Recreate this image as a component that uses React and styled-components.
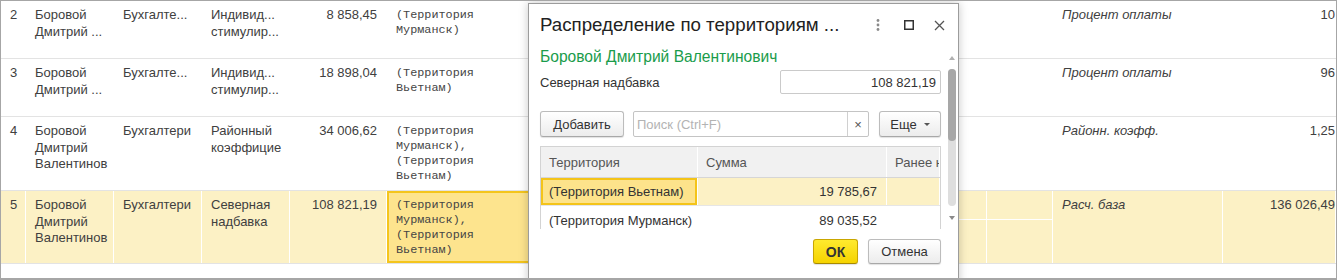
import styled, { createGlobalStyle } from 'styled-components'

const GlobalStyle = createGlobalStyle`
  html, body {
    margin: 0;
    padding: 0;
    overflow: hidden;
    background: #ffffff;
  }
  body {
    font-family: 'Liberation Sans', Arial, sans-serif;
    color: #404040;
  }
`

const COLUMNS = '25px 88px 88px 88px 97px 150px 250px 200px 66px 170px 1fr'

const rows = [
  {
    n: '2',
    name: ['Боровой', 'Дмитрий ...'],
    dept: ['Бухгалте...'],
    kind: ['Индивид...', 'стимулир...'],
    sum: '8 858,45',
    terr: ['(Территория', 'Мурманск)'],
    base: 'Процент оплаты',
    value: '10',
    height: 58,
  },
  {
    n: '3',
    name: ['Боровой', 'Дмитрий ...'],
    dept: ['Бухгалте...'],
    kind: ['Индивид...', 'стимулир...'],
    sum: '18 898,04',
    terr: ['(Территория', 'Вьетнам)'],
    base: 'Процент оплаты',
    value: '96',
    height: 58,
  },
  {
    n: '4',
    name: ['Боровой', 'Дмитрий', 'Валентинов'],
    dept: ['Бухгалтери'],
    kind: ['Районный', 'коэффицие'],
    sum: '34 006,62',
    terr: ['(Территория', 'Мурманск),', '(Территория', 'Вьетнам)'],
    base: 'Районн. коэфф.',
    value: '1,25',
    height: 74,
  },
  {
    n: '5',
    name: ['Боровой', 'Дмитрий', 'Валентинов'],
    dept: ['Бухгалтери'],
    kind: ['Северная', 'надбавка'],
    sum: '108 821,19',
    terr: ['(Территория', 'Мурманск),', '(Территория', 'Вьетнам)'],
    base: 'Расч. база',
    value: '136 026,49',
    height: 73,
    selected: true,
  },
]

const TableFrame = styled.div`
  position: relative;
  width: 1337px;
  height: 280px;
  box-sizing: border-box;
  border: 1px solid #a6a6a6;
  border-bottom-width: 2px;
  overflow: hidden;
  background: #ffffff;
`

const Row = styled.div`
  display: grid;
  grid-template-columns: ${COLUMNS};
  height: ${(p) => p.$height}px;
  box-sizing: border-box;
  border-bottom: 1px solid #e3e3e3;
  background: ${(p) => (p.$selected ? '#fcf1c5' : '#ffffff')};
`

const Cell = styled.div`
  box-sizing: border-box;
  padding: 6px ${(p) => (p.$flush ? '0' : '9px')} 0 9px;
  border-right: 1px solid #ffffff;
  font-size: 13px;
  line-height: 16.5px;
  text-align: ${(p) => p.$align || 'left'};
  font-style: ${(p) => (p.$italic ? 'italic' : 'normal')};
  overflow: hidden;
  white-space: nowrap;
`

const TerrCell = styled(Cell)`
  padding-top: 7px;
  font-family: 'Liberation Mono', 'Courier New', monospace;
  font-size: 11.8px;
  line-height: 15px;
  color: #454545;
  background: ${(p) => (p.$active ? '#fde48e' : 'transparent')};
  box-shadow: ${(p) => (p.$active ? 'inset 0 0 0 2px #f4c51c' : 'none')};
`

const SplitCell = styled.div`
  display: flex;
  flex-direction: column;
  border-right: 1px solid #ffffff;
`

const SplitPart = styled.div`
  height: ${(p) => p.$height || 'auto'};
  flex: ${(p) => (p.$height ? 'none' : '1')};
  border-bottom: ${(p) => (p.$height ? '1px solid #ffffff' : 'none')};
`

const Line = styled.div``

const Dialog = styled.div`
  position: absolute;
  left: 527px;
  top: 2px;
  bottom: -10px;
  width: 431px;
  box-sizing: border-box;
  display: flex;
  flex-direction: column;
  background: #ffffff;
  border: 1px solid #9c9c9c;
  box-shadow: 0 0 9px rgba(0, 0, 0, 0.22);
  color: #333333;
`

const DialogHeader = styled.div`
  display: flex;
  align-items: center;
  height: 42px;
  padding: 0 3px 0 11px;
`

const Title = styled.div`
  flex: 1;
  font-size: 18.7px;
  color: #222222;
  white-space: nowrap;
`

const IconButton = styled.div`
  width: 31px;
  height: 30px;
  display: flex;
  align-items: center;
  justify-content: center;
`

const DialogBody = styled.div`
  display: flex;
  height: 183px;
  padding: 0 2px 0 11px;
  overflow: hidden;
`

const Content = styled.div`
  width: 401px;
  display: flex;
  flex-direction: column;
`

const EmployeeName = styled.div`
  margin-top: 1px;
  font-size: 15.6px;
  line-height: 20px;
  color: #1a9c4b;
  white-space: nowrap;
`

const FieldRow = styled.div`
  margin-top: 3px;
  height: 24px;
  display: flex;
  align-items: center;
  justify-content: space-between;
  font-size: 13px;
`

const NumberInput = styled.div`
  width: 161px;
  height: 24px;
  box-sizing: border-box;
  border: 1px solid #cacaca;
  border-radius: 2px;
  padding-right: 4px;
  display: flex;
  align-items: center;
  justify-content: flex-end;
  font-size: 13px;
  color: #333333;
`

const Toolbar = styled.div`
  margin-top: 17px;
  height: 26px;
  display: flex;
  gap: 9px;
`

const Button = styled.div`
  width: ${(p) => p.$width}px;
  height: ${(p) => p.$height || 26}px;
  box-sizing: border-box;
  display: flex;
  align-items: center;
  justify-content: center;
  gap: 7px;
  border: 1px solid ${(p) => (p.$primary ? '#c9a600' : '#bcbcbc')};
  border-bottom-color: ${(p) => (p.$primary ? '#a88a00' : '#a8a8a8')};
  border-radius: 3px;
  background: ${(p) =>
    p.$primary
      ? 'linear-gradient(#ffea2e, #f5d300)'
      : 'linear-gradient(#ffffff, #ececec)'};
  box-shadow: 0 1px 1px rgba(0, 0, 0, 0.12);
  font-size: ${(p) => (p.$primary ? '14px' : '13px')};
  font-weight: ${(p) => (p.$primary ? 'bold' : 'normal')};
  color: #333333;
  white-space: nowrap;
`

const SearchBox = styled.div`
  width: 236px;
  margin-right: 1px;
  height: 26px;
  box-sizing: border-box;
  display: flex;
  border: 1px solid #c4c4c4;
  border-radius: 2px;
  font-size: 13px;
`

const SearchText = styled.div`
  flex: 1;
  display: flex;
  align-items: center;
  padding-left: 3px;
  color: #b3b3b3;
`

const ClearButton = styled.div`
  width: 20px;
  border-left: 1px solid #d0d0d0;
  display: flex;
  align-items: center;
  justify-content: center;
  color: #555555;
  font-size: 13px;
`

const Caret = styled.span`
  width: 0;
  height: 0;
  border-left: 3px solid transparent;
  border-right: 3px solid transparent;
  border-top: 3px solid #555555;
`

const Grid = styled.div`
  margin-top: 9px;
  border: 1px solid #d3d3d3;
  border-bottom: none;
`

const GridRow = styled.div`
  display: grid;
  grid-template-columns: 157px 189px 1fr;
  height: ${(p) => p.$height}px;
  box-sizing: border-box;
  border-bottom: 1px solid ${(p) => (p.$head ? '#d6d6d6' : '#e6e6e6')};
  background: ${(p) => (p.$head ? '#f1f1f1' : p.$selected ? '#fcf1c5' : '#ffffff')};
`

const GridCell = styled.div`
  box-sizing: border-box;
  display: flex;
  align-items: center;
  justify-content: ${(p) => (p.$right ? 'flex-end' : 'flex-start')};
  padding: 0 9px 0 8px;
  border-right: 1px solid #ffffff;
  font-size: 13px;
  color: ${(p) => (p.$head ? '#555555' : '#333333')};
  white-space: nowrap;
  overflow: hidden;
  background: ${(p) => (p.$active ? '#fde38b' : 'transparent')};
  box-shadow: ${(p) => (p.$active ? 'inset 0 0 0 2px #f4c419' : 'none')};
`

const Scrollbar = styled.div`
  width: 8px;
  margin-left: 7px;
  padding-top: 9px;
  display: flex;
  flex-direction: column;
  align-items: center;
`

const Arrow = styled.span`
  width: 0;
  height: 0;
  border-left: 3px solid transparent;
  border-right: 3px solid transparent;
  ${(p) => (p.$up ? 'border-bottom: 4px solid #b0b0b0;' : 'border-top: 4px solid #8a8a8a;')}
  margin: 1px 0;
`

const Track = styled.div`
  margin: 8px 0 9px;
  width: 8px;
  height: 137px;
  border-radius: 4px;
  background: #dedede;
`

const Thumb = styled.div`
  height: 72px;
  border-radius: 4px;
  background: #a7a7a7;
`

const DialogFooter = styled.div`
  display: flex;
  justify-content: flex-end;
  gap: 10px;
  padding: 10px 17px 0 0;
`

function DotsIcon() {
  return (
    <svg width="4" height="14" viewBox="0 0 4 14">
      <circle cx="2" cy="2.5" r="1.4" fill="#8a8a8a" />
      <circle cx="2" cy="7" r="1.4" fill="#8a8a8a" />
      <circle cx="2" cy="11.5" r="1.4" fill="#8a8a8a" />
    </svg>
  )
}

function MaximizeIcon() {
  return (
    <svg width="10" height="10" viewBox="0 0 10 10">
      <rect x="0.75" y="0.75" width="8.5" height="8.5" fill="none" stroke="#333" strokeWidth="1.5" />
    </svg>
  )
}

function CloseIcon() {
  return (
    <svg width="11" height="11" viewBox="0 0 11 11">
      <path d="M1 1 L10 10 M10 1 L1 10" stroke="#555" strokeWidth="1.3" />
    </svg>
  )
}

function Lines({ items }) {
  return items.map((t, i) => <Line key={i}>{t}</Line>)
}

function DistributionDialog() {
  return (
    <Dialog>
      <DialogHeader>
        <Title>Распределение по территориям ...</Title>
        <IconButton>
          <DotsIcon />
        </IconButton>
        <IconButton>
          <MaximizeIcon />
        </IconButton>
        <IconButton>
          <CloseIcon />
        </IconButton>
      </DialogHeader>
      <DialogBody>
        <Content>
          <EmployeeName>Боровой Дмитрий Валентинович</EmployeeName>
          <FieldRow>
            <span>Северная надбавка</span>
            <NumberInput>108 821,19</NumberInput>
          </FieldRow>
          <Toolbar>
            <Button $width={84}>Добавить</Button>
            <SearchBox>
              <SearchText>Поиск (Ctrl+F)</SearchText>
              <ClearButton>×</ClearButton>
            </SearchBox>
            <Button $width={62}>
              Еще <Caret />
            </Button>
          </Toolbar>
          <Grid>
            <GridRow $head $height={31}>
              <GridCell $head>Территория</GridCell>
              <GridCell $head>Сумма</GridCell>
              <GridCell $head>Ранее начислено</GridCell>
            </GridRow>
            <GridRow $selected $height={28}>
              <GridCell $active>(Территория Вьетнам)</GridCell>
              <GridCell $right>19 785,67</GridCell>
              <GridCell />
            </GridRow>
            <GridRow $height={30}>
              <GridCell>(Территория Мурманск)</GridCell>
              <GridCell $right>89 035,52</GridCell>
              <GridCell />
            </GridRow>
          </Grid>
        </Content>
        <Scrollbar>
          <Arrow $up />
          <Track>
            <Thumb />
          </Track>
          <Arrow />
        </Scrollbar>
      </DialogBody>
      <DialogFooter>
        <Button $primary $width={45} $height={25}>
          ОК
        </Button>
        <Button $width={73} $height={25}>
          Отмена
        </Button>
      </DialogFooter>
    </Dialog>
  )
}

export default function App() {
  return (
    <>
      <GlobalStyle />
      <TableFrame>
        {rows.map((r) => (
          <Row key={r.n} $height={r.height} $selected={r.selected}>
            <Cell $align="right">{r.n}</Cell>
            <Cell>
              <Lines items={r.name} />
            </Cell>
            <Cell>
              <Lines items={r.dept} />
            </Cell>
            <Cell>
              <Lines items={r.kind} />
            </Cell>
            <Cell $align="right">{r.sum}</Cell>
            <TerrCell $active={r.selected}>
              <Lines items={r.terr} />
            </TerrCell>
            <Cell />
            <SplitCell>
              <SplitPart $height="28px" />
              <SplitPart />
            </SplitCell>
            <SplitCell>
              <SplitPart $height="28px" />
              <SplitPart />
            </SplitCell>
            <Cell $italic>{r.base}</Cell>
            <Cell $align="right" $flush>
              {r.value}
            </Cell>
          </Row>
        ))}
        <DistributionDialog />
      </TableFrame>
    </>
  )
}
